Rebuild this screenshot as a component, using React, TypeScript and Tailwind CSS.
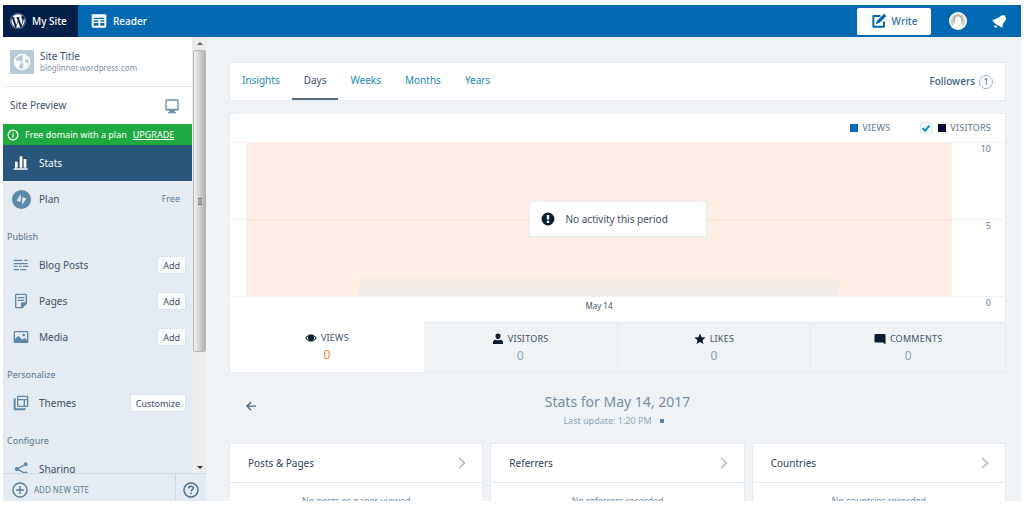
import { useState, type ReactNode } from "react";
import { FaWordpress } from "react-icons/fa";

const TABS = ["Insights", "Days", "Weeks", "Months", "Years"];

const Icon = ({ className, children }: { className: string; children: ReactNode }) => (
  <svg viewBox="0 0 24 24" fill="currentColor" aria-hidden="true" className={className}>
    {children}
  </svg>
);

const ICONS = {
  reader: (
    <path
      fillRule="evenodd"
      d="M2 2h20a1 1 0 0 1 1 1v17a2 2 0 0 1-2 2H3a2 2 0 0 1-2-2V3a1 1 0 0 1 1-1zm2 5v2h16V7H4zm0 4v2h7v-2H4zm0 4v4h7v-4H4zm10-4v2h6v-2h-6zm0 4v4h6v-4h-6z"
    />
  ),
  create: (
    <path d="M21 13v7a2 2 0 0 1-2 2H4a2 2 0 0 1-2-2V5a2 2 0 0 1 2-2h10v3H5v13h13v-6h3zM23 4.500 19.500 1 9 11.500 7 17l5.500-2L23 4.500z" />
  ),
  bell: (
    <path d="M4 14.800 16.500 22l1-6.500 4.300-5.400c1.200-1.900.8-4.600-1-6l.2-2.100-2.400.5c-1.800-.7-3.500-.3-4.800.8L8 7.200.5 9.500 4 14.800zM4.500 17.500a2.500 2.500 0 1 0 4 2.200l-4-2.200z" />
  ),
  monitor: (
    <path
      fillRule="evenodd"
      d="M4 2h16a2 2 0 0 1 2 2v13a2 2 0 0 1-2 2h-4v2h2v2H6v-2h2v-2H4a2 2 0 0 1-2-2V4a2 2 0 0 1 2-2zm0 2v12h16V4H4z"
    />
  ),
  info: (
    <path
      fillRule="evenodd"
      d="M12 1a11 11 0 1 1 0 22 11 11 0 0 1 0-22zm0 2.500a8.500 8.500 0 1 0 0 17 8.500 8.500 0 0 0 0-17zM10.800 10.500h2.400V17h-2.400zM10.800 6.800h2.400V9h-2.400z"
    />
  ),
  stats: <path d="M1 20h21v2H1zM3 10h4v9H3zM10 2h4v17h-4zM16 6h4v13h-4z" />,
  plan: (
    <path
      fillRule="evenodd"
      d="M12 0a12 12 0 1 1 0 24 12 12 0 0 1 0-24zm-1 5-5 8.500 5 1.300V5zm2 14 5-8.500-5-1.300V19z"
    />
  ),
  posts: (
    <path d="M1 4h13v2H1zM17 4h5v2h-5zM1 9h21v2H1zM1 13h6v2H1zM9 13h4v2H9zM15 13h8v2h-8zM1 18h8v2H1zM11 18h9v2h-9z" />
  ),
  pages: (
    <path
      fillRule="evenodd"
      d="M5 1h14a2 2 0 0 1 2 2v13l-7 7H5a2 2 0 0 1-2-2V3a2 2 0 0 1 2-2zm0 2v18h7v-5a2 2 0 0 1 2-2h5V3H5zm2 3h10v2H7zM7 10h10v2H7z"
    />
  ),
  media: (
    <path
      fillRule="evenodd"
      d="M3 3h18a2 2 0 0 1 2 2v14a2 2 0 0 1-2 2H3a2 2 0 0 1-2-2V5a2 2 0 0 1 2-2zm0 2v10l5-5 6 6 3-3 4 4V5H3zm13 2a2 2 0 1 1 0 4 2 2 0 0 1 0-4z"
    />
  ),
  themes: (
    <path
      fillRule="evenodd"
      d="M8 1h13a2 2 0 0 1 2 2v13a2 2 0 0 1-2 2H8a2 2 0 0 1-2-2V3a2 2 0 0 1 2-2zm0 2v3h13V3H8zm0 5v8h8V8H8zm10 0v8h3V8h-3zM1 7a2 2 0 0 1 2-2h1v15h15v1a2 2 0 0 1-2 2H3a2 2 0 0 1-2-2V7z"
    />
  ),
  share: (
    <path d="M19 2a3 3 0 1 1-1.900 5.300L8.900 11.600v.8l8.200 4.300A3 3 0 1 1 16.200 18.500L7.900 14.200a3 3 0 1 1 0-4.400l8.300-4.300A3 3 0 0 1 19 2z" />
  ),
  eye: (
    <path
      fillRule="evenodd"
      d="M12 5c6 0 11 5.500 11.500 7-.5 1.500-5.500 7-11.500 7S1 13.500.5 12C1 10.500 6 5 12 5zM6.500 8.500C4.500 9.700 3.300 11.200 3 12c.4.900 2 2.600 4.500 3.900a6.500 6.500 0 0 1-1-7.400zm11 0a6.500 6.500 0 0 1-1 7.400C19 14.600 20.600 12.900 21 12c-.3-.8-1.500-2.300-3.500-3.500z"
    />
  ),
  user: (
    <path d="M12 1a5 5 0 0 1 5 5c0 3.500-2 6.500-5 6.500S7 9.500 7 6a5 5 0 0 1 5-5zM7.500 13.500c3 1.500 6 1.500 9 0 4 .6 5.500 2.500 5.500 5V22H2v-3.500c0-2.500 1.500-4.400 5.500-5z" />
  ),
  star: <path d="m12 1 3.200 7.400 8 .7-6.100 5.200L19 22.200l-7-4.200-7 4.200 1.900-7.900L.8 9.100l8-.7z" />,
  comment: <path d="M3 2h18a2 2 0 0 1 2 2v19l-5-4H3a2 2 0 0 1-2-2V4a2 2 0 0 1 2-2z" />,
  notice: (
    <path
      fillRule="evenodd"
      d="M12 1a11 11 0 1 1 0 22 11 11 0 0 1 0-22zm-2 4v8h4V5h-4zm0 10v4h4v-4h-4z"
    />
  ),
  arrow: <path d="M22 11v2.500H7l6 6-1.800 1.800L2 12.200l9.200-9.100L13 4.900 7 11z" />,
};

interface MenuRow {
  label: string;
  icon: ReactNode;
  action?: string;
}

const MENU: { heading: string; rows: MenuRow[] }[] = [
  {
    heading: "Publish",
    rows: [
      { label: "Blog Posts", icon: ICONS.posts, action: "Add" },
      { label: "Pages", icon: ICONS.pages, action: "Add" },
      { label: "Media", icon: ICONS.media, action: "Add" },
    ],
  },
  {
    heading: "Personalize",
    rows: [{ label: "Themes", icon: ICONS.themes, action: "Customize" }],
  },
  { heading: "Configure", rows: [{ label: "Sharing", icon: ICONS.share }] },
];

const TOTALS = [
  { label: "Views", icon: ICONS.eye },
  { label: "Visitors", icon: ICONS.user },
  { label: "Likes", icon: ICONS.star },
  { label: "Comments", icon: ICONS.comment },
];

const MODULES = [
  { title: "Posts & Pages", empty: "No posts or pages viewed" },
  { title: "Referrers", empty: "No referrers recorded" },
  { title: "Countries", empty: "No countries recorded" },
];

const Masthead = () => (
  <header className="flex h-8 shrink-0 items-stretch bg-[#0069b1] text-[10px] font-medium text-white">
    <a href="#" className="flex w-[75px] items-center gap-[6px] bg-[#001f49] pl-[7px]">
      <FaWordpress className="size-4" />
      My Site
    </a>
    <a href="#" className="flex items-center gap-[6px] px-[13px]">
      <Icon className="size-4">{ICONS.reader}</Icon>
      Reader
    </a>
    <div className="ml-auto flex items-center pr-[14px]">
      <button
        type="button"
        className="flex h-[27px] w-[74px] items-center justify-center gap-[5px] rounded-xs bg-white text-[#2a72a5]"
      >
        <Icon className="size-4 text-[#0069b1]">{ICONS.create}</Icon>
        Write
      </button>
      <button type="button" aria-label="My profile" className="ml-[18px]">
        <svg viewBox="0 0 18 18" className="size-[18px]" aria-hidden="true">
          <circle cx="9" cy="9" r="9" fill="#fff" />
          <circle cx="9" cy="9" r="7.500" fill="#d9d2cd" />
          <path d="M4 15c0-3 2-4 5-4s5 1 5 4a8 8 0 0 1-10 0z" fill="#fff" />
          <ellipse cx="9" cy="8.500" rx="3.200" ry="4" fill="#fff" />
          <path d="M5 9c0-4 1.500-5.500 4-5.500S13 5 13 9" fill="none" stroke="#a99a92" strokeWidth="1.200" />
        </svg>
      </button>
      <button type="button" aria-label="Notifications" className="ml-[25px]">
        <Icon className="size-[15px]">{ICONS.bell}</Icon>
      </button>
    </div>
  </header>
);

const Sidebar = () => (
  <aside className="flex w-[203px] shrink-0 flex-col bg-[#e4ebf2] text-[10px] text-[#3d5168]">
    <div className="flex min-h-0 flex-1">
      <nav className="flex-1 overflow-hidden">
        <a href="#" className="flex h-[50px] items-center gap-[6px] border-b border-[#dbe7ee] bg-white pl-[7px]">
          <svg viewBox="0 0 24 24" className="size-6 bg-[#b5cbdb]" aria-hidden="true">
            <circle cx="12" cy="12" r="7.500" fill="none" stroke="#fff" strokeWidth="1.500" />
            <path
              fill="#fff"
              d="M5 10c3 0 4 1.500 6 1.500 1 0 .5 2-1 3s-1 3-1 4.500c-3-1-5-5-4-9zm8-5c3 .5 5 2.500 6 5-1.500-1-3-1.500-4 0s1 3 3 3c-.500 3-3 5-5 6 0-2 1-4 0-5.500s-1-3 0-4-1.500-2 0-4.500z"
            />
          </svg>
          <span className="flex flex-col leading-[12px]">
            <span>Site Title</span>
            <span className="text-[8px] text-[#8194a5]">bloglinner.wordpress.com</span>
          </span>
        </a>
        <a href="#" className="flex h-[37px] items-center justify-between bg-white pr-3 pl-[7px]">
          Site Preview
          <Icon className="size-4 text-[#6890ae]">{ICONS.monitor}</Icon>
        </a>
        <div className="flex h-[21px] items-center bg-[#1eaa41] pl-1 text-[9px] text-white">
          <Icon className="mr-[6px] size-3">{ICONS.info}</Icon>
          Free domain with a plan
          <a href="#" className="ml-[6px] underline">
            UPGRADE
          </a>
        </div>
        <a href="#" className="flex h-9 items-center bg-[#29567c] pl-[10px] text-white">
          <Icon className="mr-[10px] size-4">{ICONS.stats}</Icon>
          Stats
        </a>
        <a href="#" className="flex h-9 items-center pr-3 pl-[9px]">
          <Icon className="mr-2 size-[19px] text-[#5c89aa]">{ICONS.plan}</Icon>
          Plan
          <span className="ml-auto text-[9px] text-[#567ea0]">Free</span>
        </a>
        {MENU.map((section) => (
          <section key={section.heading}>
            <h2 className="flex h-[30px] items-center pt-[9px] pl-1 text-[9px] text-[#557691]">
              {section.heading}
            </h2>
            <ul>
              {section.rows.map((row) => (
                <li key={row.label} className="flex h-9 items-center justify-between pr-[6px] pl-[10px]">
                  <a href="#" className="flex items-center gap-[10px]">
                    <Icon className="size-4 text-[#5c89aa]">{row.icon}</Icon>
                    {row.label}
                  </a>
                  {row.action && (
                    <button
                      type="button"
                      className="h-[18px] rounded-xs border border-[#dbe5ec] bg-[#fbfcfd] px-[5px] text-[9px] leading-none"
                    >
                      {row.action}
                    </button>
                  )}
                </li>
              ))}
            </ul>
          </section>
        ))}
      </nav>
      <div aria-hidden="true" className="ml-px flex w-[13px] flex-col items-center bg-[#ededed]">
        <span className="flex h-[13px] items-center">
          <span className="border-x-[3px] border-b-[3px] border-x-transparent border-b-[#666]" />
        </span>
        <div className="flex h-[302px] w-full items-center justify-center rounded-xs border border-[#b5b5b5] bg-linear-to-r from-[#f3f3f3] to-[#b2b2b2]">
          <span className="h-[7px] w-1 border-y border-[#777] bg-[#a5a5a5]" />
        </div>
        <span className="mt-auto mb-1 border-x-[3px] border-t-[3px] border-x-transparent border-t-[#333]" />
      </div>
    </div>
    <footer className="flex h-7 items-stretch border-t border-[#ccd8e2] text-[8px] text-[#5a7c97]">
      <button type="button" className="flex flex-1 items-center gap-[6px] pt-1 pl-[9px]">
        <svg viewBox="0 0 16 16" fill="none" stroke="currentColor" strokeWidth="1.400" className="size-4" aria-hidden="true">
          <circle cx="8" cy="8" r="7" />
          <path d="M8 4v8M4 8h8" />
        </svg>
        ADD NEW SITE
      </button>
      <button
        type="button"
        aria-label="Help"
        className="flex w-[31px] items-center justify-center border-l border-[#ccd8e2] pt-1 text-[#44739a]"
      >
        <svg viewBox="0 0 16 16" fill="none" stroke="currentColor" strokeWidth="1.500" className="size-4" aria-hidden="true">
          <circle cx="8" cy="8" r="7" />
          <path d="M5.700 6.500C5.700 5 6.700 4.200 8 4.200s2.300.8 2.300 2S8 7.800 8 9.300M8 10.600v1.600" />
        </svg>
      </button>
    </footer>
  </aside>
);

const StatsChart = ({ showVisitors, onToggle }: { showVisitors: boolean; onToggle: () => void }) => (
  <section className="mt-3 border border-[#e4eaf0] bg-white">
    <div className="flex h-7 items-center justify-end pr-[14px] text-[9px] tracking-wide text-[#5f7386]">
      <span className="flex items-center gap-1">
        <span className="size-2 bg-[#0069b1]" />
        VIEWS
      </span>
      <label className="ml-[30px] flex items-center gap-[6px]">
        <span className="relative size-3">
          <input
            type="checkbox"
            checked={showVisitors}
            onChange={onToggle}
            className="block size-3 appearance-none rounded-xs border border-[#dbe5ec] bg-white"
          />
          {showVisitors && (
            <svg
              viewBox="0 0 12 12"
              fill="none"
              stroke="#0c8fce"
              strokeWidth="2"
              className="pointer-events-none absolute inset-0 size-3"
              aria-hidden="true"
            >
              <path d="m2.500 6 2.500 2.800L9.500 3.500" />
            </svg>
          )}
        </span>
        <span className="flex items-center gap-1">
          <span className="size-2 bg-[#000a3d]" />
          VISITORS
        </span>
      </label>
    </div>

    <div className="relative text-[9px] leading-3 text-[#5f7d96]">
      <div className="flex h-[77px]">
        <div className="w-4 border-t border-[#eef2f5]" />
        <div className="flex-1 border-t border-[#f5ece6] bg-[#feeee3]" />
        <div className="w-[53px] border-t border-[#eef2f5] pr-[14px] text-right">10</div>
      </div>
      <div className="flex h-[77px]">
        <div className="w-4 border-t border-[#eef2f5]" />
        <div className="flex flex-1 items-end justify-center border-t border-[#f3e5db] bg-[#feeee3]">
          <div className="h-[22px] w-[68%] bg-linear-to-b from-[#fbede3] to-[#efece9]" />
        </div>
        <div className="w-[53px] border-t border-[#eef2f5] pr-[14px] text-right">5</div>
      </div>
      <div className="flex h-[26px] border-t border-[#eef2f5] pl-4">
        <div className="flex-1 pt-[3px] text-center text-[8px] text-[#3d5168]">May 14</div>
        <div className="w-[53px] pr-[14px] text-right">0</div>
      </div>
      <div className="absolute inset-x-0 top-[59px] flex justify-center">
        <p className="flex h-9 w-[178px] items-center gap-[11px] border border-[#e8ebee] bg-white pl-[11px] text-[10px] text-[#3d5168]">
          <Icon className="size-[14px] text-[#0a1e33]">{ICONS.notice}</Icon>
          No activity this period
        </p>
      </div>
    </div>

    <ul className="grid h-[50px] grid-cols-4 text-[9px] text-[#3d5168]">
      {TOTALS.map((total, index) => (
        <li
          key={total.label}
          className={
            index === 0
              ? "bg-white"
              : "border-t border-r border-[#e4eaf0] bg-[#eff3f6] last:border-r-0"
          }
        >
          <a href="#" className="flex h-full flex-col items-center justify-center">
            <span className="flex items-center gap-1 leading-4 tracking-wide uppercase">
              <Icon className="size-3 text-[#0a1e33]">{total.icon}</Icon>
              {total.label}
            </span>
            <span
              className={
                index === 0
                  ? "text-[12px] leading-[18px] text-[#f0882d]"
                  : "text-[12px] leading-[18px] text-[#86a3ba]"
              }
            >
              0
            </span>
          </a>
        </li>
      ))}
    </ul>
  </section>
);

export default function App() {
  const [tab, setTab] = useState("Days");
  const [showVisitors, setShowVisitors] = useState(true);

  return (
    <div className="flex h-screen flex-col overflow-hidden bg-white px-[3px] pt-[5px] pb-1 font-['Noto_Sans',sans-serif]">
      <Masthead />
      <div className="flex min-h-0 flex-1">
        <Sidebar />
        <main className="min-w-0 flex-1 overflow-hidden bg-[#eff3f6] pt-[25px] pr-[15px] pl-[23px]">
          <div className="flex h-[39px] items-stretch justify-between border border-[#e4eaf0] bg-white pr-3 text-[10px]">
            <div className="flex items-stretch">
              {TABS.map((name) => (
                <button
                  key={name}
                  type="button"
                  onClick={() => setTab(name)}
                  className={[
                    "border-b-2 px-3",
                    name === tab
                      ? "border-[#596d7b] text-[#3d5168]"
                      : "border-transparent text-[#158ac0]",
                  ].join(" ")}
                >
                  {name}
                </button>
              ))}
            </div>
            <a href="#" className="flex items-center gap-1 font-medium text-[#3c5f7c]">
              Followers
              <span className="grid size-[14px] place-items-center rounded-full border border-[#9fb3c4] text-[9px] leading-none font-normal">
                1
              </span>
            </a>
          </div>

          <StatsChart showVisitors={showVisitors} onToggle={() => setShowVisitors(!showVisitors)} />

          <div className="grid h-[70px] grid-cols-[1fr_auto_1fr] items-start pt-[19px] pl-4 text-[#748ea4]">
            <button type="button" aria-label="Previous day" className="mt-2 justify-self-start text-[#44647e]">
              <Icon className="size-3">{ICONS.arrow}</Icon>
            </button>
            <div className="pr-4 text-center">
              <h1 className="text-[14px] leading-5">Stats for May 14, 2017</h1>
              <p className="flex items-center justify-center gap-2 pr-2 text-[9px] leading-[18px] text-[#8da5b8]">
                Last update: 1:20 PM
                <span className="size-1 bg-[#5b86ab]" />
              </p>
            </div>
          </div>

          <div className="grid grid-cols-3 gap-[7px]">
            {MODULES.map((module) => (
              <section key={module.title} className="border border-[#e4eaf0] bg-white">
                <a
                  href="#"
                  className="flex h-[39px] items-center justify-between border-b border-[#e4eaf0] pr-4 pl-[18px] text-[10px] text-[#2f4459]"
                >
                  {module.title}
                  <svg viewBox="0 0 8 12" fill="none" stroke="#a9bdcc" strokeWidth="1.500" className="h-3 w-2" aria-hidden="true">
                    <path d="m1 1 5.500 5L1 11" />
                  </svg>
                </a>
                <p className="pt-3 text-center text-[9px] leading-3 text-[#748ea4]">{module.empty}</p>
              </section>
            ))}
          </div>
        </main>
      </div>
    </div>
  );
}
